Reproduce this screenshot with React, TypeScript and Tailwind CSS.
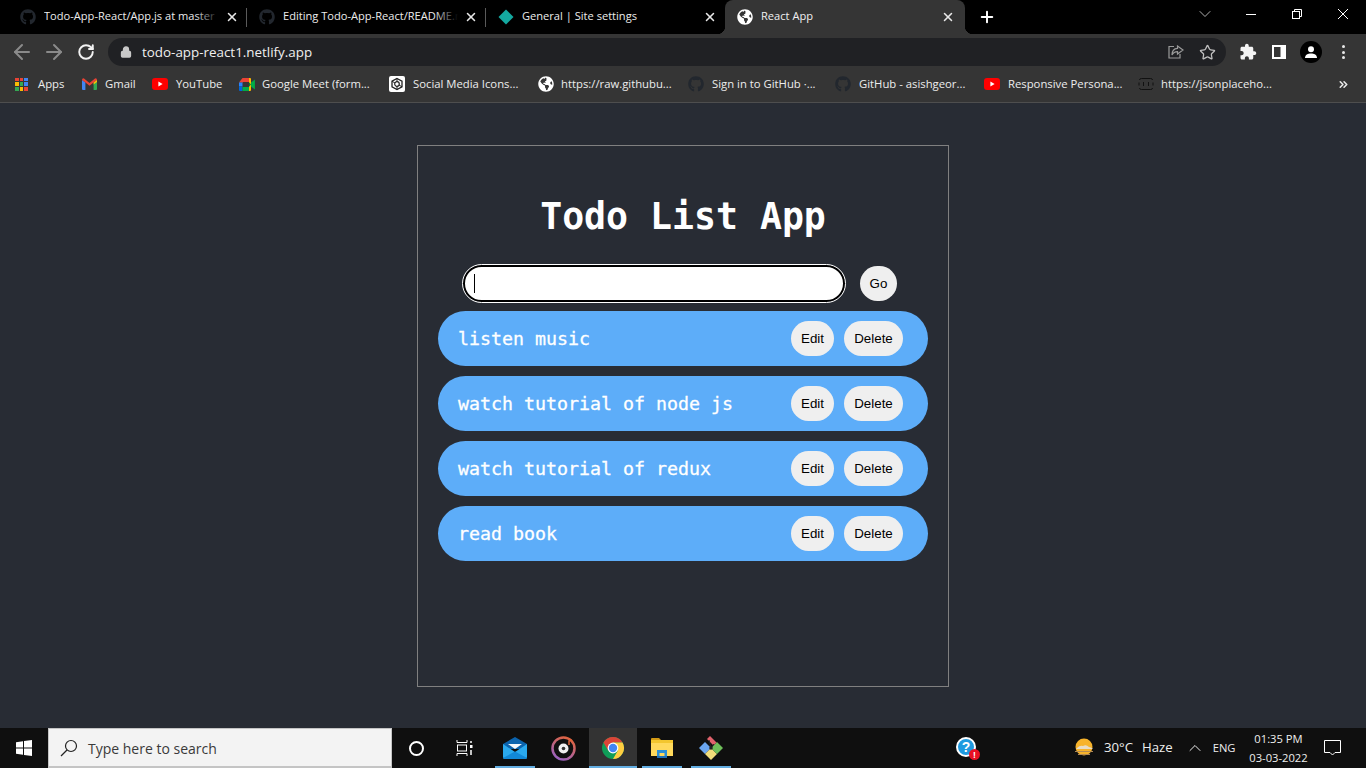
import React from "react";
import { FaGithub, FaGlobeAmericas } from "react-icons/fa";
import { Star, ChevronDown, X, Plus, ArrowLeft, ArrowRight, RotateCw, Lock, ChevronsRight, ChevronUp } from "lucide-react";

const ui = { fontFamily: '"Open Sans","Noto Sans",sans-serif' };

function Gh({ size = 16 }: { size?: number }) {
  return <FaGithub size={size} color="#22272e" />;
}
function Globe({ size = 16 }: { size?: number }) {
  return (
    <span className="flex items-center justify-center rounded-full bg-[#353535]" style={{ width: size, height: size }}>
      <FaGlobeAmericas size={size} color="#ffffff" />
    </span>
  );
}
function Diamond() {
  return (
    <svg width="16" height="16" viewBox="0 0 16 16">
      <path d="M8 0.5 L15.5 8 L8 15.5 L0.5 8Z" fill="#14a9a0" />
    </svg>
  );
}
function Yt() {
  return (
    <svg width="16" height="12" viewBox="0 0 16 12">
      <rect width="16" height="12" rx="3" fill="#f00" />
      <path d="M6.4 3.4 L10.6 6 L6.4 8.6Z" fill="#fff" />
    </svg>
  );
}
function Gmail() {
  return (
    <svg width="15" height="12" viewBox="0 0 15 12">
      <path d="M0 2 V11 Q0 12 1 12 H3.4 V4.5Z" fill="#4285f4" />
      <path d="M15 2 V11 Q15 12 14 12 H11.6 V4.5Z" fill="#34a853" />
      <path d="M0 2 Q0 0 2 0.4 L7.5 5 L13 0.4 Q15 0 15 2 L11.6 4.5 L7.5 7.8 L3.4 4.5Z" fill="#ea4335" />
      <path d="M11.6 4.5 L15 2 V4 L11.6 6.5Z" fill="#fbbc04" />
    </svg>
  );
}
function Meet() {
  return (
    <svg width="16" height="13" viewBox="0 0 16 13">
      <path d="M3.5 0 H10 V4 H4 V4.5 H0Z" fill="#ea4335" />
      <path d="M0 4.5 H3.5 V8.5 H0Z" fill="#2684fc" />
      <path d="M0 8.5 H3.5 V13 H1 Q0 13 0 12Z" fill="#0066da" />
      <path d="M3.5 9 H10 V13 H3.5Z" fill="#00ac47" />
      <path d="M10 0 H11 Q12 0 12 1 V12 Q12 13 11 13 H10Z" fill="#ffba00" />
      <path d="M10 4.2 L12 6.5 L10 8.8Z" fill="#00832d" />
      <path d="M12 4.5 L15.9 1.6 V11.4 L12 8.5Z" fill="#00ac47" />
    </svg>
  );
}
function Social() {
  return (
    <svg width="16" height="16" viewBox="0 0 16 16">
      <rect width="16" height="16" rx="2" fill="#fff" />
      <path d="M8 2.5 L13 5.2 V10.8 L8 13.5 L3 10.8 V5.2Z" fill="none" stroke="#222" strokeWidth="1.3" />
      <circle cx="8" cy="8" r="2.3" fill="none" stroke="#222" strokeWidth="1.2" />
      <path d="M8 2.5 V5.7 M8 10.3 V13.5 M3 5.2 L6 7 M10 9 L13 10.8" stroke="#222" strokeWidth="1" />
    </svg>
  );
}
function Apps() {
  const c = ["#ea4335", "#ea4335", "#4285f4", "#fbbc04", "#34a853", "#4285f4", "#34a853", "#fbbc04", "#ea4335"];
  return (
    <span className="grid grid-cols-3 gap-[1px] w-[13px] h-[13px]">
      {c.map((x, i) => (
        <span key={i} style={{ background: x }} />
      ))}
    </span>
  );
}
function Json() {
  return (
    <svg width="16" height="14" viewBox="0 0 16 14" fill="none" stroke="#111" strokeWidth="1">
      <path d="M1.5 3 Q1.5 1.5 3.5 1.5 H12.5 Q14.5 1.5 14.5 3 M1.5 11 Q1.5 12.5 3.5 12.5 H12.5 Q14.5 12.5 14.5 11 M1 5.5 V8.5 M15 5.5 V8.5 M5.5 5 V9 M10.5 5 V9" />
    </svg>
  );
}

const tabs = [
  { icon: <Gh />, title: "Todo-App-React/App.js at master", fade: true },
  { icon: <Gh />, title: "Editing Todo-App-React/README.md", fade: true },
  { icon: <Diamond />, title: "General | Site settings", fade: false },
];

function Tab({ icon, title, fade, last }: { icon: React.ReactNode; title: string; fade: boolean; last: boolean }) {
  return (
    <div className="relative flex items-center w-[239px] h-[34px] pl-3">
      <span className="w-4 h-4 flex items-center justify-center shrink-0">{icon}</span>
      <div className="relative ml-2 w-[175px] pb-[2px] overflow-hidden whitespace-nowrap text-[11.1px] text-[#ececec]">
        {title}
        {fade && <span className="absolute right-0 top-0 h-full w-6 bg-gradient-to-r from-transparent to-black" />}
      </div>
      <X size={14} strokeWidth={2.6} color="#e8e8e8" className="ml-[6px] shrink-0" />
      {!last && <span className="absolute right-0 top-[8px] h-[19px] w-px bg-[#5a5a5a]" />}
    </div>
  );
}

function TabStrip() {
  return (
    <div className="flex h-[34px] bg-black pl-2" style={ui}>
      {tabs.map((t, i) => (
        <Tab key={i} icon={t.icon} title={t.title} fade={t.fade} last={i === 2} />
      ))}
      <div className="relative flex items-center w-[240px] h-[34px] pl-3 bg-[#353535] rounded-t-lg">
        <Globe />
        <span className="ml-[8px] w-[175px] pb-[2px] text-[11.1px] text-[#f0f0f0]">React App</span>
        <X size={14} strokeWidth={2.6} color="#e8e8e8" className="ml-[5px]" />
        <span className="absolute -left-2 bottom-0 w-2 h-2 bg-[radial-gradient(circle_at_0_0,transparent_8px,#353535_8.5px)]" />
        <span className="absolute -right-2 bottom-0 w-2 h-2 bg-[radial-gradient(circle_at_100%_0,transparent_8px,#353535_8.5px)]" />
      </div>
      <div className="flex items-center ml-[13px]">
        <Plus size={18} strokeWidth={2.6} color="#fff" />
      </div>
      <div className="flex items-start flex-1 justify-end">
        <span className="w-[46px] h-[28px] flex items-center justify-center">
          <ChevronDown size={20} strokeWidth={1} color="#d0d0d0" />
        </span>
        <span className="w-[46px] h-[28px] flex items-center justify-center">
          <span className="block w-[10px] h-px bg-white" />
        </span>
        <span className="w-[46px] h-[28px] flex items-center justify-center">
          <svg width="10" height="10" viewBox="0 0 10 10" fill="none" stroke="#fff" strokeWidth="1">
            <rect x="0.5" y="2.5" width="7" height="7" />
            <path d="M2.5 2.5 V0.5 H9.5 V7.5 H7.5" />
          </svg>
        </span>
        <span className="w-[46px] h-[28px] flex items-center justify-center">
          <svg width="10" height="10" viewBox="0 0 10 10" stroke="#fff" strokeWidth="1">
            <path d="M0 0 L10 10 M10 0 L0 10" />
          </svg>
        </span>
      </div>
    </div>
  );
}

function Toolbar() {
  return (
    <div className="flex items-center h-[32px] pt-[4px] bg-[#353535]" style={ui}>
      <div className="flex items-center w-[108px] pl-[10px]">
        <ArrowLeft size={24} strokeWidth={2} color="#8a8a8a" />
        <ArrowRight size={24} strokeWidth={2} color="#8a8a8a" className="ml-[8px]" />
        <RotateCw size={18} strokeWidth={2.6} color="#f2f2f2" className="ml-[11px]" />
      </div>
      <div className="flex items-center w-[1118px] h-[28px] rounded-full bg-[#202124] pl-[12px] pr-[10px]">
        <Lock size={12} strokeWidth={2.6} color="#c8c8c8" fill="#c8c8c8" />
        <span className="ml-[10px] text-[13.4px] text-[#f0f0f0] whitespace-nowrap">todo-app-react1.netlify.app</span>
        <span className="flex-1" />
        <svg width="16" height="14" viewBox="0 0 16 14" fill="none" stroke="#9a9a9a" strokeWidth="1.2">
          <path d="M6 1.5 H1 V13 H12 V9" />
          <path d="M9.5 1 L15 5 L9.5 9 V6.6 C6.5 6.6 5 8 4 10 C4 6 6 3.6 9.5 3.4Z" />
        </svg>
        <Star size={17} strokeWidth={1.8} color="#c0c0c0" className="ml-[15px]" />
      </div>
      <div className="flex items-center flex-1 pl-[13px]">
        <svg width="18" height="18" viewBox="0 0 24 24" fill="#f5f5f5">
          <path d="M20.5 11H19V7c0-1.1-.9-2-2-2h-4V3.5C13 2.12 11.88 1 10.5 1S8 2.12 8 3.5V5H4c-1.1 0-1.99.9-1.99 2v3.8H3.5c1.49 0 2.7 1.21 2.7 2.7s-1.21 2.7-2.7 2.7H2V20c0 1.1.9 2 2 2h3.8v-1.5c0-1.49 1.21-2.7 2.7-2.7 1.49 0 2.7 1.21 2.7 2.7V22H17c1.1 0 2-.9 2-2v-4h1.5c1.38 0 2.5-1.12 2.5-2.5S21.88 11 20.5 11z" />
        </svg>
        <svg width="14" height="14" viewBox="0 0 14 14" className="ml-[15px]">
          <rect width="14" height="14" fill="#fff" />
          <rect x="2" y="2" width="6.5" height="10" fill="#353535" />
        </svg>
        <span className="ml-[14px] w-[22px] h-[22px] rounded-full bg-black flex items-center justify-center">
          <svg width="14" height="14" viewBox="0 0 14 14" fill="#fff">
            <circle cx="7" cy="4.2" r="3" />
            <path d="M1 13 C1 9.5 4 8.4 7 8.4 C10 8.4 13 9.5 13 13Z" />
          </svg>
        </span>
        <span className="ml-[20px] flex flex-col gap-[2.5px]">
          <span className="block w-[3px] h-[3px] rounded-full bg-[#e8e8e8]" />
          <span className="block w-[3px] h-[3px] rounded-full bg-[#e8e8e8]" />
          <span className="block w-[3px] h-[3px] rounded-full bg-[#e8e8e8]" />
        </span>
      </div>
    </div>
  );
}

const marks = [
  { w: "w-[67px]", i: <Apps />, g: "gap-[10px]", t: "Apps" },
  { w: "w-[70px]", i: <Gmail />, g: "gap-[8px]", t: "Gmail" },
  { w: "w-[87px]", i: <Yt />, g: "gap-[8px]", t: "YouTube" },
  { w: "w-[150px]", i: <Meet />, g: "gap-[7px]", t: "Google Meet (form..." },
  { w: "w-[149px]", i: <Social />, g: "gap-[8px]", t: "Social Media Icons..." },
  { w: "w-[150px]", i: <Globe />, g: "gap-[7px]", t: "https://raw.githubu..." },
  { w: "w-[147px]", i: <Gh />, g: "gap-[8px]", t: "Sign in to GitHub ·..." },
  { w: "w-[149px]", i: <Gh />, g: "gap-[8px]", t: "GitHub - asishgeor..." },
  { w: "w-[154px]", i: <Yt />, g: "gap-[8px]", t: "Responsive Persona..." },
  { w: "w-[190px]", i: <Json />, g: "gap-[7px]", t: "https://jsonplaceho..." },
];

function Bookmarks() {
  return (
    <div className="flex items-center h-[37px] pl-[15px] bg-[#353535] border-b border-[#4e4e4e]" style={ui}>
      {marks.map((m, i) => (
        <div key={i} className={`flex items-center shrink-0 ${m.w} ${m.g}`}>
          <span className="flex items-center justify-center shrink-0">{m.i}</span>
          <span className="text-[11.3px] text-[#ededed] whitespace-nowrap">{m.t}</span>
        </div>
      ))}
      <ChevronsRight size={13} strokeWidth={3} color="#e8e8e8" className="ml-[9px]" />
    </div>
  );
}

const todos = ["listen music", "watch tutorial of node js", "watch tutorial of redux", "read book"];
const btn = "h-[35px] rounded-full bg-[#efefef] text-black text-[13.33px]";

function Card() {
  return (
    <div className="w-[532px] h-[542px] border border-[#808080] px-5 pt-[51px]">
      <h1
        className="h-[40px] leading-[40px] text-center text-white font-bold text-[36.5px]"
        style={{ fontFamily: '"DejaVu Sans Mono",monospace' }}
      >
        Todo List App
      </h1>
      <div className="flex items-center mt-[28px] ml-[25px] mb-[9px]" style={{ fontFamily: '"Liberation Sans",sans-serif' }}>
        <div className="relative">
          <input
            readOnly
            className="block w-[382px] h-[37px] rounded-full bg-white border-2 border-black outline outline-white"
          />
          <span className="absolute left-[11px] top-[9px] w-px h-[19px] bg-black" />
        </div>
        <button className="ml-[15px] w-[37px] h-[35px] rounded-full bg-[#efefef] text-black text-[13.33px]">Go</button>
      </div>
      <div className="flex flex-col gap-[10px]">
        {todos.map((t) => (
          <div key={t} className="flex items-center h-[55px] rounded-full bg-[#5dadf9] pl-5 pr-[25px]">
            <span
              className="flex-1 text-white text-[18.27px] [-webkit-text-stroke:0.3px_white]"
              style={{ fontFamily: '"DejaVu Sans Mono",monospace' }}
            >
              {t}
            </span>
            <div className="flex gap-[10px]" style={{ fontFamily: '"Liberation Sans",sans-serif' }}>
              <button className={`${btn} w-[43px]`}>Edit</button>
              <button className={`${btn} w-[59px]`}>Delete</button>
            </div>
          </div>
        ))}
      </div>
    </div>
  );
}

function Cortana() {
  return <span className="block w-[15px] h-[15px] rounded-full border-2 border-white" />;
}
function TaskView() {
  return (
    <svg width="17" height="16" viewBox="0 0 17 16" fill="none" stroke="#fff" strokeWidth="1">
      <path d="M1 2.5 H11 M1 13.5 H11" />
      <rect x="1.5" y="5" width="9" height="6" />
      <path d="M11 0 V2.5 M1 0 V2.5 M1 13.5 V16 M11 13.5 V16" />
      <rect x="14" y="5" width="2.5" height="3" fill="#fff" stroke="none" />
      <path d="M15 1 V3 M15 10 V15" strokeWidth="1.5" />
    </svg>
  );
}
function Mail() {
  return (
    <svg width="24" height="22" viewBox="0 0 24 22">
      <path d="M12 0 L24 7 V12 H0 V7Z" fill="#0b63ad" />
      <path d="M5 7 H19 L12 12Z" fill="#f4f7fa" />
      <path d="M0 7 L12 15 L24 7 V20 Q24 22 22 22 H2 Q0 22 0 20Z" fill="#2aa9ee" />
      <path d="M0 21 L12 14.5 L24 21 Q24 22 22 22 H2 Q0 22 0 21Z" fill="#1188d8" />
    </svg>
  );
}
function Groove() {
  return (
    <svg width="25" height="25" viewBox="0 0 25 25">
      <defs>
        <linearGradient id="gr" x1="0.8" y1="0" x2="0.3" y2="1">
          <stop offset="0" stopColor="#e2643a" />
          <stop offset="1" stopColor="#9a62c0" />
        </linearGradient>
      </defs>
      <circle cx="12.5" cy="12.5" r="11" fill="none" stroke="url(#gr)" strokeWidth="2.5" />
      <circle cx="12.5" cy="12.5" r="5" fill="#f0f0f0" />
      <circle cx="12.5" cy="12.5" r="1.8" fill="#333" />
      <path d="M18 9 V5 L21 4" fill="none" stroke="#e2643a" strokeWidth="1.5" />
    </svg>
  );
}
function Chrome() {
  return (
    <svg width="24" height="24" viewBox="0 0 24 24">
      <circle cx="12" cy="12" r="11" fill="#0f9d58" />
      <path d="M2.47 6.5 A11 11 0 0 1 21.53 6.5 H12 L7.24 14.75Z" fill="#db4437" />
      <path d="M21.53 6.5 A11 11 0 0 1 12 23 L16.76 14.75 L12 6.5Z" fill="#ffcd40" />
      <circle cx="12" cy="12" r="5.4" fill="#fff" />
      <circle cx="12" cy="12" r="4.2" fill="#4285f4" />
    </svg>
  );
}
function Folder() {
  return (
    <svg width="22" height="20" viewBox="0 0 22 20">
      <path d="M0 1 Q0 0 1 0 H8 L10 2 H0Z" fill="#d39a15" />
      <rect y="2" width="22" height="16" fill="#f3c62f" />
      <rect y="5" width="22" height="13" fill="#ffd95c" />
      <path d="M6 18 V12 H16 V18 H13.5 V15 H8.5 V18Z" fill="#2b8fd6" />
      <rect x="6" y="18" width="10" height="2" fill="#1d6fb5" />
    </svg>
  );
}
function Git() {
  return (
    <svg width="24" height="24" viewBox="0 0 24 24">
      <path d="M6 6 L12 12 L6 18 L0 12Z" fill="#6aa5ef" />
      <path d="M12 12 L18 18 L12 24 L6 18Z" fill="#f2dd7a" />
      <path d="M18 6 L24 12 L18 18 L12 12Z" fill="#6fbf5a" />
      <path d="M8 3 L11 0 L17.5 6.5 L14.5 9.5Z" fill="#e0626c" />
      <circle cx="12" cy="12" r="1.8" fill="#222" />
      <path d="M10 4 L12 12 L15 8" stroke="#222" strokeWidth="1" fill="none" />
    </svg>
  );
}
function Help() {
  return (
    <span className="relative block w-[22px] h-[22px]">
      <span
        className="flex items-center justify-center w-[20px] h-[20px] rounded-full bg-[#1f9ae0] border-2 border-white text-white text-[14px] font-bold"
        style={{ fontFamily: '"Liberation Sans",sans-serif' }}
      >
        ?
      </span>
      <span className="absolute right-[-2px] bottom-[-1px] flex items-center justify-center w-[11px] h-[11px] rounded-full bg-[#e81123] text-white text-[8px] font-bold leading-none">
        !
      </span>
    </span>
  );
}
function Sun() {
  return (
    <svg width="20" height="20" viewBox="0 0 20 20">
      <circle cx="10" cy="9" r="8.5" fill="#f7b32b" />
      <path d="M3 10 Q6 7 9 8 Q12 6 15 9 Q18 9.5 19 11 H2Z" fill="#e8dcc4" />
      <path d="M1 13 H19 V14 H1Z M4 16 H16 V17 H4Z" fill="#b28a55" />
    </svg>
  );
}

function Taskbar() {
  const under = "absolute left-0 right-0 bottom-0 h-[2px] bg-[#63aee2]";
  return (
    <div className="flex items-stretch h-10 bg-[#0f0f0f] text-white" style={ui}>
      <div className="flex items-center justify-center w-[48px]">
        <svg width="16" height="16" viewBox="0 0 16 16" fill="#fff">
          <path d="M0 2.2 L7 1.2 V7.5 H0Z M8 1 L16 0 V7.5 H8Z M0 8.5 H7 V14.8 L0 13.8Z M8 8.5 H16 V16 L8 15Z" />
        </svg>
      </div>
      <div className="flex items-center w-[344px] bg-[#f3f3f3] border border-[#c4c4c4] border-b-2 pl-[11px] text-[#333]">
        <svg width="18" height="18" viewBox="0 0 18 18" fill="none" stroke="#222" strokeWidth="1.2">
          <circle cx="11" cy="7" r="5.5" />
          <path d="M7 11 L1 17" />
        </svg>
        <span className="ml-[10px] pt-[1px] text-[14px] text-[#3a3a3a]">Type here to search</span>
      </div>
      <div className="flex items-center justify-center w-[48px]"><Cortana /></div>
      <div className="flex items-center justify-center w-[48px]"><TaskView /></div>
      <div className="relative flex items-center justify-center w-[40px] ml-[7px]"><Mail /><span className={under} /></div>
      <div className="flex items-center justify-center w-[54px] pl-[3px]"><Groove /></div>
      <div className="relative flex items-center justify-center w-[48px] bg-[#333]"><Chrome /><span className={under} /></div>
      <div className="relative flex items-center justify-center w-[40px] ml-[5px]"><Folder /><span className={under} /></div>
      <div className="relative flex items-center justify-center w-[40px] ml-[9px]"><Git /><span className={under} /></div>
      <div className="flex items-center pl-[225px]"><Help /></div>
      <div className="flex items-center pl-[96px]"><Sun /></div>
      <div className="flex items-center pl-[10px] text-[13.2px] text-[#eee]">30°C</div>
      <div className="flex items-center pl-[9px] text-[13.2px] text-[#eee]">Haze</div>
      <div className="flex items-center pl-[12px]"><ChevronUp size={20} strokeWidth={1.2} color="#eee" /></div>
      <div className="flex items-center pl-[8px] text-[11.2px] text-[#eee]">ENG</div>
      <div className="flex flex-col items-center justify-center w-[64px] ml-[11px] text-[11.2px] leading-[19px] text-[#eee]">
        <span>01:35 PM</span>
        <span>03-03-2022</span>
      </div>
      <div className="flex items-center pl-[14px]">
        <svg width="17" height="16" viewBox="0 0 17 16" fill="none" stroke="#fff" strokeWidth="1">
          <path d="M0.5 0.5 H16.5 V12.5 H11 L8.5 15 L6 12.5 H0.5Z" />
        </svg>
      </div>
    </div>
  );
}

export default function App() {
  return (
    <div className="flex flex-col h-screen overflow-hidden bg-[#282c34]">
      <TabStrip />
      <Toolbar />
      <Bookmarks />
      <main className="flex-1 flex justify-center pt-[42px]">
        <Card />
      </main>
      <Taskbar />
    </div>
  );
}
